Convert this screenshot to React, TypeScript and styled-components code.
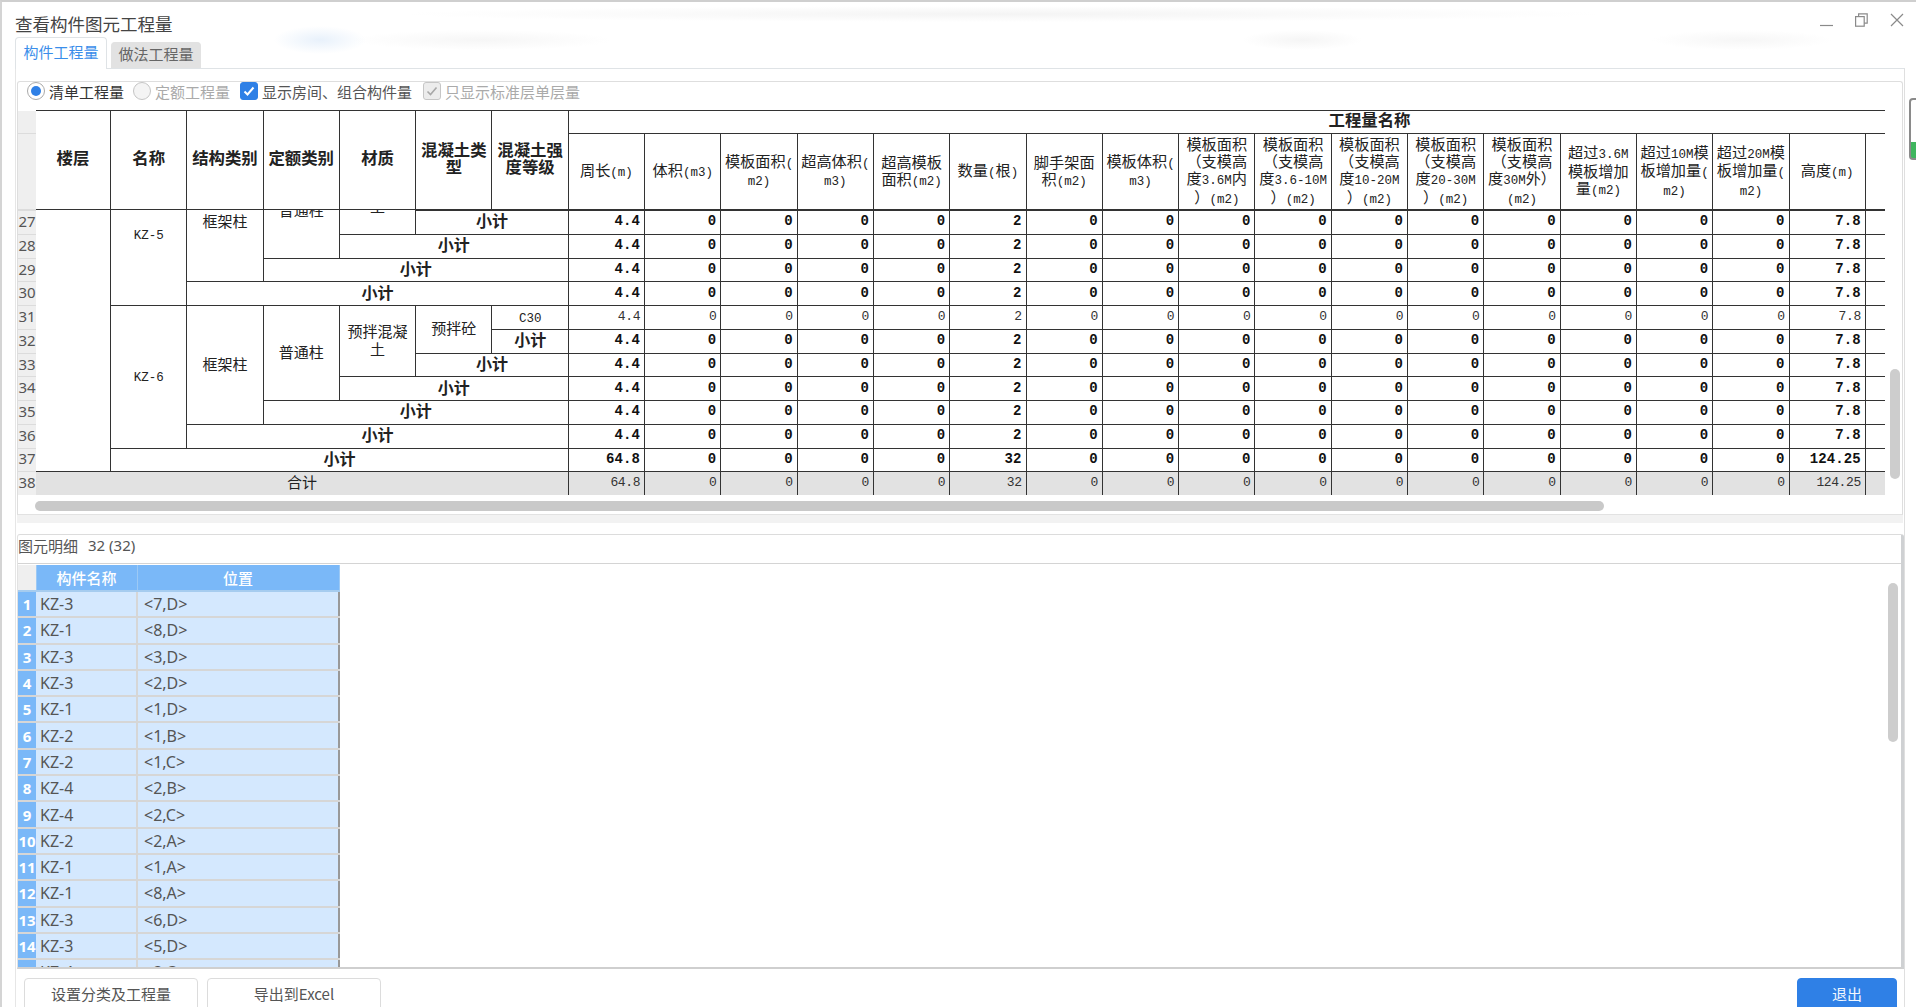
import React from 'react';
import styled, { createGlobalStyle } from 'styled-components';

const CJK = '"Noto Sans CJK SC", "Noto Sans", sans-serif';
const MONO = '"Liberation Mono", monospace';
const UI = '"Noto Sans", "Noto Sans CJK SC", sans-serif';

const GlobalStyle = createGlobalStyle`
  html, body {
    margin: 0;
    padding: 0;
    background: #fff;
    overflow: hidden;
  }
  * {
    box-sizing: border-box;
  }
`;

const Window = styled.div`
  position: relative;
  width: 1916px;
  height: 1007px;
  overflow: hidden;
  border-top: 2px solid #cfcfcf;
  border-left: 2px solid #d4d4d4;
  font-family: ${UI};
  background:
    radial-gradient(ellipse 46px 14px at 318px 38px, #e8f1fb, transparent),
    radial-gradient(ellipse 600px 8px at 1000px 12px, #f4f4f4, transparent),
    radial-gradient(ellipse 130px 10px at 480px 38px, #f6f6f6, transparent),
    radial-gradient(ellipse 60px 10px at 1300px 38px, #f5f5f5, transparent),
    radial-gradient(ellipse 90px 10px at 1740px 38px, #f6f6f6, transparent),
    #fff;
`;

const TitleBar = styled.div`
  display: flex;
  align-items: center;
  justify-content: space-between;
  height: 35px;
  padding: 9px 12px 0 13px;
`;

const Title = styled.div`
  font-family: ${CJK};
  font-size: 17.5px;
  line-height: 24px;
  color: #444;
`;

const WindowButtons = styled.div`
  display: flex;
  align-items: center;
  gap: 22px;
  margin-top: -9px;
  svg {
    display: block;
  }
`;

const TabRow = styled.div`
  display: flex;
  align-items: flex-end;
  gap: 4px;
  height: 31px;
  margin-left: 13px;
`;

const Tab = styled.div<{ $active?: boolean }>`
  display: flex;
  align-items: center;
  justify-content: center;
  width: ${p => (p.$active ? 92 : 90)}px;
  height: ${p => (p.$active ? 32 : 26)}px;
  margin-bottom: ${p => (p.$active ? -1 : 0)}px;
  padding-bottom: ${p => (p.$active ? 5 : 4)}px;
  font-family: ${CJK};
  font-size: 15px;
  color: ${p => (p.$active ? '#3a8eea' : '#666')};
  background: ${p => (p.$active ? '#fff' : '#e2e2e2')};
  border: 1px solid ${p => (p.$active ? '#dfe3e6' : '#e2e2e2')};
  border-bottom: none;
  border-radius: 4px 4px 0 0;
  position: relative;
`;

const Frame = styled.div`
  width: 1890px;
  margin-left: 13px;
  padding: 12px 1px 0;
  border-top: 1px solid #dfe3e6;
  border-left: 1px solid #e6e6e6;
  border-right: 1px solid #dfdfdf;
`;

const UpperPane = styled.div`
  position: relative;
  height: 434px;
  overflow: hidden;
  border: 1px solid #dedede;
  border-bottom-color: #e2e2e2;
  border-radius: 3px 3px 0 0;
`;

const Toolbar = styled.div`
  display: flex;
  align-items: center;
  height: 28px;
  padding: 0 0 10px 9px;
  font-family: ${CJK};
  font-size: 15px;
`;

const Option = styled.label<{ $gap: number; $disabled?: boolean; $color?: string }>`
  display: flex;
  align-items: center;
  gap: 4px;
  margin-right: ${p => p.$gap}px;
  color: ${p => p.$color || (p.$disabled ? '#aaa' : '#333')};
`;

const Radio = styled.span<{ $on?: boolean }>`
  display: flex;
  align-items: center;
  justify-content: center;
  width: 18px;
  height: 18px;
  border-radius: 50%;
  border: 1px solid ${p => (p.$on ? '#a9a9a9' : '#c4c4c4')};
  background: ${p => (p.$on ? '#fff' : '#f4f4f4')};
  &::after {
    content: '';
    display: ${p => (p.$on ? 'block' : 'none')};
    width: 10px;
    height: 10px;
    border-radius: 50%;
    background: #2f80e6;
  }
`;

const CheckBox = styled.span<{ $disabled?: boolean }>`
  display: flex;
  align-items: center;
  justify-content: center;
  width: 18px;
  height: 18px;
  border-radius: 3px;
  border: 1px solid ${p => (p.$disabled ? '#c6c6c6' : '#2f80e6')};
  background: ${p => (p.$disabled ? '#ececec' : '#2f80e6')};
`;

const GridClip = styled.div`
  width: 1867px;
  overflow: hidden;
`;

const ScrollBody = styled.div`
  height: 285px;
  overflow: hidden;
`;

const Table = styled.table<{ $offset?: number }>`
  table-layout: fixed;
  border-collapse: collapse;
  width: ${18 + 74.5 + 76.3 * 27}px;
  margin-top: ${p => p.$offset || 0}px;
  font-family: ${CJK};
  font-size: 15px;
  line-height: 17.4px;
  color: #222;
`;

const HeadRow = styled.tr<{ $h: number }>`
  height: ${p => p.$h}px;
`;

const BodyRow = styled.tr`
  height: 23.72px;
`;

const NumCell = styled.td`
  padding: 0 0 2px;
  border: none;
  border-bottom: 1px solid #dcdcdc;
  background: #efefef;
  font-family: ${UI};
  font-size: 15px;
  line-height: 17px;
  color: #555;
  text-align: center;
`;

const Th = styled.th<{ $bold?: boolean; $noLeft?: boolean }>`
  padding: 0 0 ${p => (p.$bold ? 4 : 2)}px;
  border: 1px solid #333;
  ${p => p.$noLeft && 'border-left: none;'}
  font-size: ${p => (p.$bold ? 16.4 : 15.2)}px;
  font-weight: ${p => (p.$bold ? 700 : 400)};
  text-align: center;
  white-space: pre-line;
`;

const Td = styled.td<{ $bold?: boolean; $grey?: boolean; $noLeft?: boolean }>`
  padding: 0 0 ${p => (p.$grey ? 4 : 3)}px;
  border: 1px solid #333;
  ${p => p.$noLeft && 'border-left: none;'}
  font-size: ${p => (p.$bold ? 16 : 15)}px;
  font-weight: ${p => (p.$bold ? 700 : 400)};
  background: ${p => (p.$grey ? '#e2e2e2' : '#fff')};
  text-align: center;
  white-space: pre-line;
`;

const Value = styled(Td)`
  padding: 0 4px 1px 0;
  text-align: right;
  font-family: ${MONO};
  font-size: ${p => (p.$bold ? 14 : 13)}px;
  letter-spacing: ${p => (p.$bold ? 0.1 : -0.4)}px;
  color: ${p => (p.$bold ? '#111' : '#333')};
`;

const Latin = styled.span`
  font-family: ${MONO};
  font-size: 12.5px;
  line-height: 1;
`;

const HScroll = styled.div`
  position: absolute;
  left: 17px;
  top: 419px;
  width: 1569px;
  height: 10px;
  border-radius: 5px;
  background: #c9c9c9;
`;

const VScroll = styled.div<{ $top: number; $h: number; $right: number }>`
  position: absolute;
  right: ${p => p.$right}px;
  top: ${p => p.$top}px;
  width: 10px;
  height: ${p => p.$h}px;
  border-radius: 5px;
  background: #cdcdcd;
`;

const Splitter = styled.div`
  height: 8px;
  background: #f2f2f2;
`;

const LowerPane = styled.div`
  position: relative;
  height: 435px;
  margin-top: 11px;
  overflow: hidden;
  border-top: 1px solid #dcdcdc;
  border-left: 1px solid #e2e2e2;
  border-right: 3px solid #cfd1d3;
  border-bottom: 2px solid #cfcfcf;
  margin-right: -1px;
  border-radius: 3px 3px 0 0;
`;

const PaneTitle = styled.div`
  display: flex;
  align-items: center;
  gap: 10px;
  height: 29px;
  padding-bottom: 8px;
  border-bottom: 1px solid #d4d4d4;
  font-family: ${CJK};
  font-size: 15px;
  color: #555;
`;

const Count = styled.span`
  font-family: ${UI};
`;

const DetailTable = styled.table`
  table-layout: fixed;
  border-collapse: collapse;
  width: 321px;
  margin-top: 1px;
  font-family: ${UI};
  font-size: 16px;
  color: #555;
`;

const DetailHead = styled.th<{ $corner?: boolean }>`
  height: 26px;
  padding: 0;
  font-family: ${CJK};
  font-size: 15px;
  font-weight: 500;
  color: #fff;
  background: ${p => (p.$corner ? '#efefef' : '#7ab8f8')};
  border-right: 1px solid #9cc9f5;
  border-bottom: 2px solid #a6ccef;
`;

const DetailNum = styled.td`
  height: 26.3px;
  padding: 0;
  background: #7ab8f8;
  color: #fff;
  font-weight: 700;
  font-size: 15px;
  text-align: center;
  border-bottom: 2px solid #d6d6d6;
`;

const DetailCell = styled.td<{ $last?: boolean }>`
  padding: 0 0 0 ${p => (p.$last ? 6 : 4)}px;
  background: #d4e8fe;
  border-bottom: 2px solid #d6d6d6;
  border-right: ${p => (p.$last ? '2px solid #999' : '2px solid #d6d6d6')};
`;

const Footer = styled.div`
  display: flex;
  align-items: flex-start;
  gap: 9px;
  padding: 9px 6px 0 8px;
  margin-left: -1px;
`;

const Button = styled.button<{ $primary?: boolean }>`
  width: ${p => (p.$primary ? 100 : 174)}px;
  height: 42px;
  margin-left: ${p => (p.$primary ? 'auto' : 0)};
  padding: 0 0 12px;
  font-family: ${CJK};
  font-size: 15px;
  color: ${p => (p.$primary ? '#f2f7fe' : '#555')};
  background: ${p => (p.$primary ? '#2f80e6' : '#fff')};
  border: 1px solid ${p => (p.$primary ? '#2f80e6' : '#dcdcdc')};
  border-radius: 4px;
`;

const SideTab = styled.div`
  position: absolute;
  left: 1907px;
  top: 96px;
  width: 12px;
  height: 62px;
  border: 2px solid #8a8a8a;
  border-radius: 4px;
  background: linear-gradient(#fff 0 42px, #3fb55e 42px);
`;

// 字母数字用等宽小一号,跟原表的宋体半角宽度差不多
function Mixed({ text }: { text: string }) {
  return (
    <>
      {text.split(/([A-Za-z0-9.\-()]+)/).map((part, i) =>
        i % 2 ? <Latin key={i}>{part}</Latin> : part,
      )}
    </>
  );
}

const fixedHeads = ['楼层', '名称', '结构类别', '定额类别', '材质', '混凝土类\n型', '混凝土强\n度等级'];

const qtyHeads = [
  '周长(m)',
  '体积(m3)',
  '模板面积(\nm2)',
  '超高体积(\nm3)',
  '超高模板\n面积(m2)',
  '数量(根)',
  '脚手架面\n积(m2)',
  '模板体积(\nm3)',
  '模板面积\n（支模高\n度3.6M内\n）(m2)',
  '模板面积\n（支模高\n度3.6-10M\n）(m2)',
  '模板面积\n（支模高\n度10-20M\n）(m2)',
  '模板面积\n（支模高\n度20-30M\n）(m2)',
  '模板面积\n（支模高\n度30M外）\n(m2)',
  '超过3.6M\n模板增加\n量(m2)',
  '超过10M模\n板增加量(\nm2)',
  '超过20M模\n板增加量(\nm2)',
  '高度(m)',
  '截\n\u00a0',
  '',
  '',
  '',
];

const colWidths = [18, 74.5, ...Array(27).fill(76.3)];

function Cols() {
  return (
    <colgroup>
      {colWidths.map((w, i) => (
        <col key={i} style={{ width: w }} />
      ))}
    </colgroup>
  );
}

function Values({ bold, grey, total }: { bold?: boolean; grey?: boolean; total?: boolean }) {
  const vals = qtyHeads.map((_, i) => {
    if (i === 0) return total ? '64.8' : '4.4';
    if (i === 5) return total ? '32' : '2';
    if (i === 16) return total ? '124.25' : '7.8';
    return i > 16 ? '' : '0';
  });
  return (
    <>
      {vals.map((v, i) => (
        <Value key={i} $bold={bold} $grey={grey}>
          {v}
        </Value>
      ))}
    </>
  );
}

function MemberRows({ start, name, floor }: { start: number; name: string; floor?: boolean }) {
  return (
    <>
      <BodyRow>
        <NumCell>{start}</NumCell>
        {floor && <Td rowSpan={13} $noLeft />}
        <Td rowSpan={6}>
          <Mixed text={name} />
        </Td>
        <Td rowSpan={5}>框架柱</Td>
        <Td rowSpan={4}>普通柱</Td>
        <Td rowSpan={3}>{'预拌混凝\n土'}</Td>
        <Td rowSpan={2}>预拌砼</Td>
        <Td>
          <Mixed text="C30" />
        </Td>
        <Values />
      </BodyRow>
      {[1, 2, 3, 4, 5].map(n => (
        <BodyRow key={n}>
          <NumCell>{start + n}</NumCell>
          <Td colSpan={n} $bold>
            小计
          </Td>
          <Values bold />
        </BodyRow>
      ))}
    </>
  );
}

const elements = [
  ['KZ-3', '<7,D>'],
  ['KZ-1', '<8,D>'],
  ['KZ-3', '<3,D>'],
  ['KZ-3', '<2,D>'],
  ['KZ-1', '<1,D>'],
  ['KZ-2', '<1,B>'],
  ['KZ-2', '<1,C>'],
  ['KZ-4', '<2,B>'],
  ['KZ-4', '<2,C>'],
  ['KZ-2', '<2,A>'],
  ['KZ-1', '<1,A>'],
  ['KZ-1', '<8,A>'],
  ['KZ-3', '<6,D>'],
  ['KZ-3', '<5,D>'],
  ['KZ-4', '<3,C>'],
];

export default function App() {
  return (
    <Window>
      <GlobalStyle />
      <TitleBar>
        <Title>查看构件图元工程量</Title>
        <WindowButtons>
          <svg width="13" height="14" viewBox="0 0 13 14" fill="none" stroke="#8a8a8a" strokeWidth="1.2">
            <path d="M0 12.5h13" />
          </svg>
          <svg width="13" height="14" viewBox="0 0 13 14" fill="none" stroke="#8a8a8a" strokeWidth="1.2">
            <rect x="0.6" y="3.6" width="8.6" height="9.6" />
            <path d="M3.6 3.6V0.8h8.6v9.4H9.2" />
          </svg>
          <svg width="14" height="14" viewBox="0 0 14 14" fill="none" stroke="#8a8a8a" strokeWidth="1.2">
            <path d="M1 1l12 12M13 1L1 13" />
          </svg>
        </WindowButtons>
      </TitleBar>
      <TabRow>
        <Tab $active>构件工程量</Tab>
        <Tab>做法工程量</Tab>
      </TabRow>
      <Frame>
        <UpperPane>
          <Toolbar>
            <Option $gap={9}>
              <Radio $on />
              清单工程量
            </Option>
            <Option $gap={10} $disabled>
              <Radio />
              定额工程量
            </Option>
            <Option $gap={11} $color="#555">
              <CheckBox>
                <svg width="14" height="14" viewBox="0 0 14 14" fill="none" stroke="#fff" strokeWidth="2">
                  <path d="M2.5 7.5l3 3 6-7" />
                </svg>
              </CheckBox>
              显示房间、组合构件量
            </Option>
            <Option $gap={0} $disabled>
              <CheckBox $disabled>
                <svg width="14" height="14" viewBox="0 0 14 14" fill="none" stroke="#a8a8a8" strokeWidth="1.6">
                  <path d="M2.5 7.5l3 3 6-7" />
                </svg>
              </CheckBox>
              只显示标准层单层量
            </Option>
          </Toolbar>
          <GridClip>
            <Table>
              <Cols />
              <tbody>
                <HeadRow $h={22.7}>
                  <NumCell />
                  {fixedHeads.map((h, i) => (
                    <Th key={h} rowSpan={2} $bold $noLeft={i === 0}>
                      {h}
                    </Th>
                  ))}
                  <Th colSpan={qtyHeads.length} $bold>
                    工程量名称
                  </Th>
                </HeadRow>
                <HeadRow $h={76.6}>
                  <NumCell />
                  {qtyHeads.map((h, i) => (
                    <Th key={i}>
                      <Mixed text={h} />
                    </Th>
                  ))}
                </HeadRow>
              </tbody>
            </Table>
            <ScrollBody>
              <Table $offset={-47.4}>
                <Cols />
                <tbody>
                  <MemberRows start={25} name="KZ-5" floor />
                  <MemberRows start={31} name="KZ-6" />
                  <BodyRow>
                    <NumCell>37</NumCell>
                    <Td colSpan={6} $bold>
                      小计
                    </Td>
                    <Values bold total />
                  </BodyRow>
                  <BodyRow>
                    <NumCell>38</NumCell>
                    <Td colSpan={7} $grey $noLeft>
                      合计
                    </Td>
                    <Values grey total />
                  </BodyRow>
                </tbody>
              </Table>
            </ScrollBody>
          </GridClip>
          <HScroll />
          <VScroll $top={287} $h={110} $right={2} />
        </UpperPane>
        <Splitter />
        <LowerPane>
          <PaneTitle>
            图元明细
            <Count>32 (32)</Count>
          </PaneTitle>
          <DetailTable>
            <colgroup>
              <col style={{ width: 18 }} />
              <col style={{ width: 101 }} />
              <col style={{ width: 202 }} />
            </colgroup>
            <thead>
              <tr>
                <DetailHead $corner />
                <DetailHead>构件名称</DetailHead>
                <DetailHead>位置</DetailHead>
              </tr>
            </thead>
            <tbody>
              {elements.map(([name, pos], i) => (
                <tr key={i}>
                  <DetailNum>{i + 1}</DetailNum>
                  <DetailCell>{name}</DetailCell>
                  <DetailCell $last>{pos}</DetailCell>
                </tr>
              ))}
            </tbody>
          </DetailTable>
          <VScroll $top={48} $h={159} $right={3} />
        </LowerPane>
        <Footer>
          <Button>设置分类及工程量</Button>
          <Button>导出到Excel</Button>
          <Button $primary>退出</Button>
        </Footer>
      </Frame>
      <SideTab />
    </Window>
  );
}
